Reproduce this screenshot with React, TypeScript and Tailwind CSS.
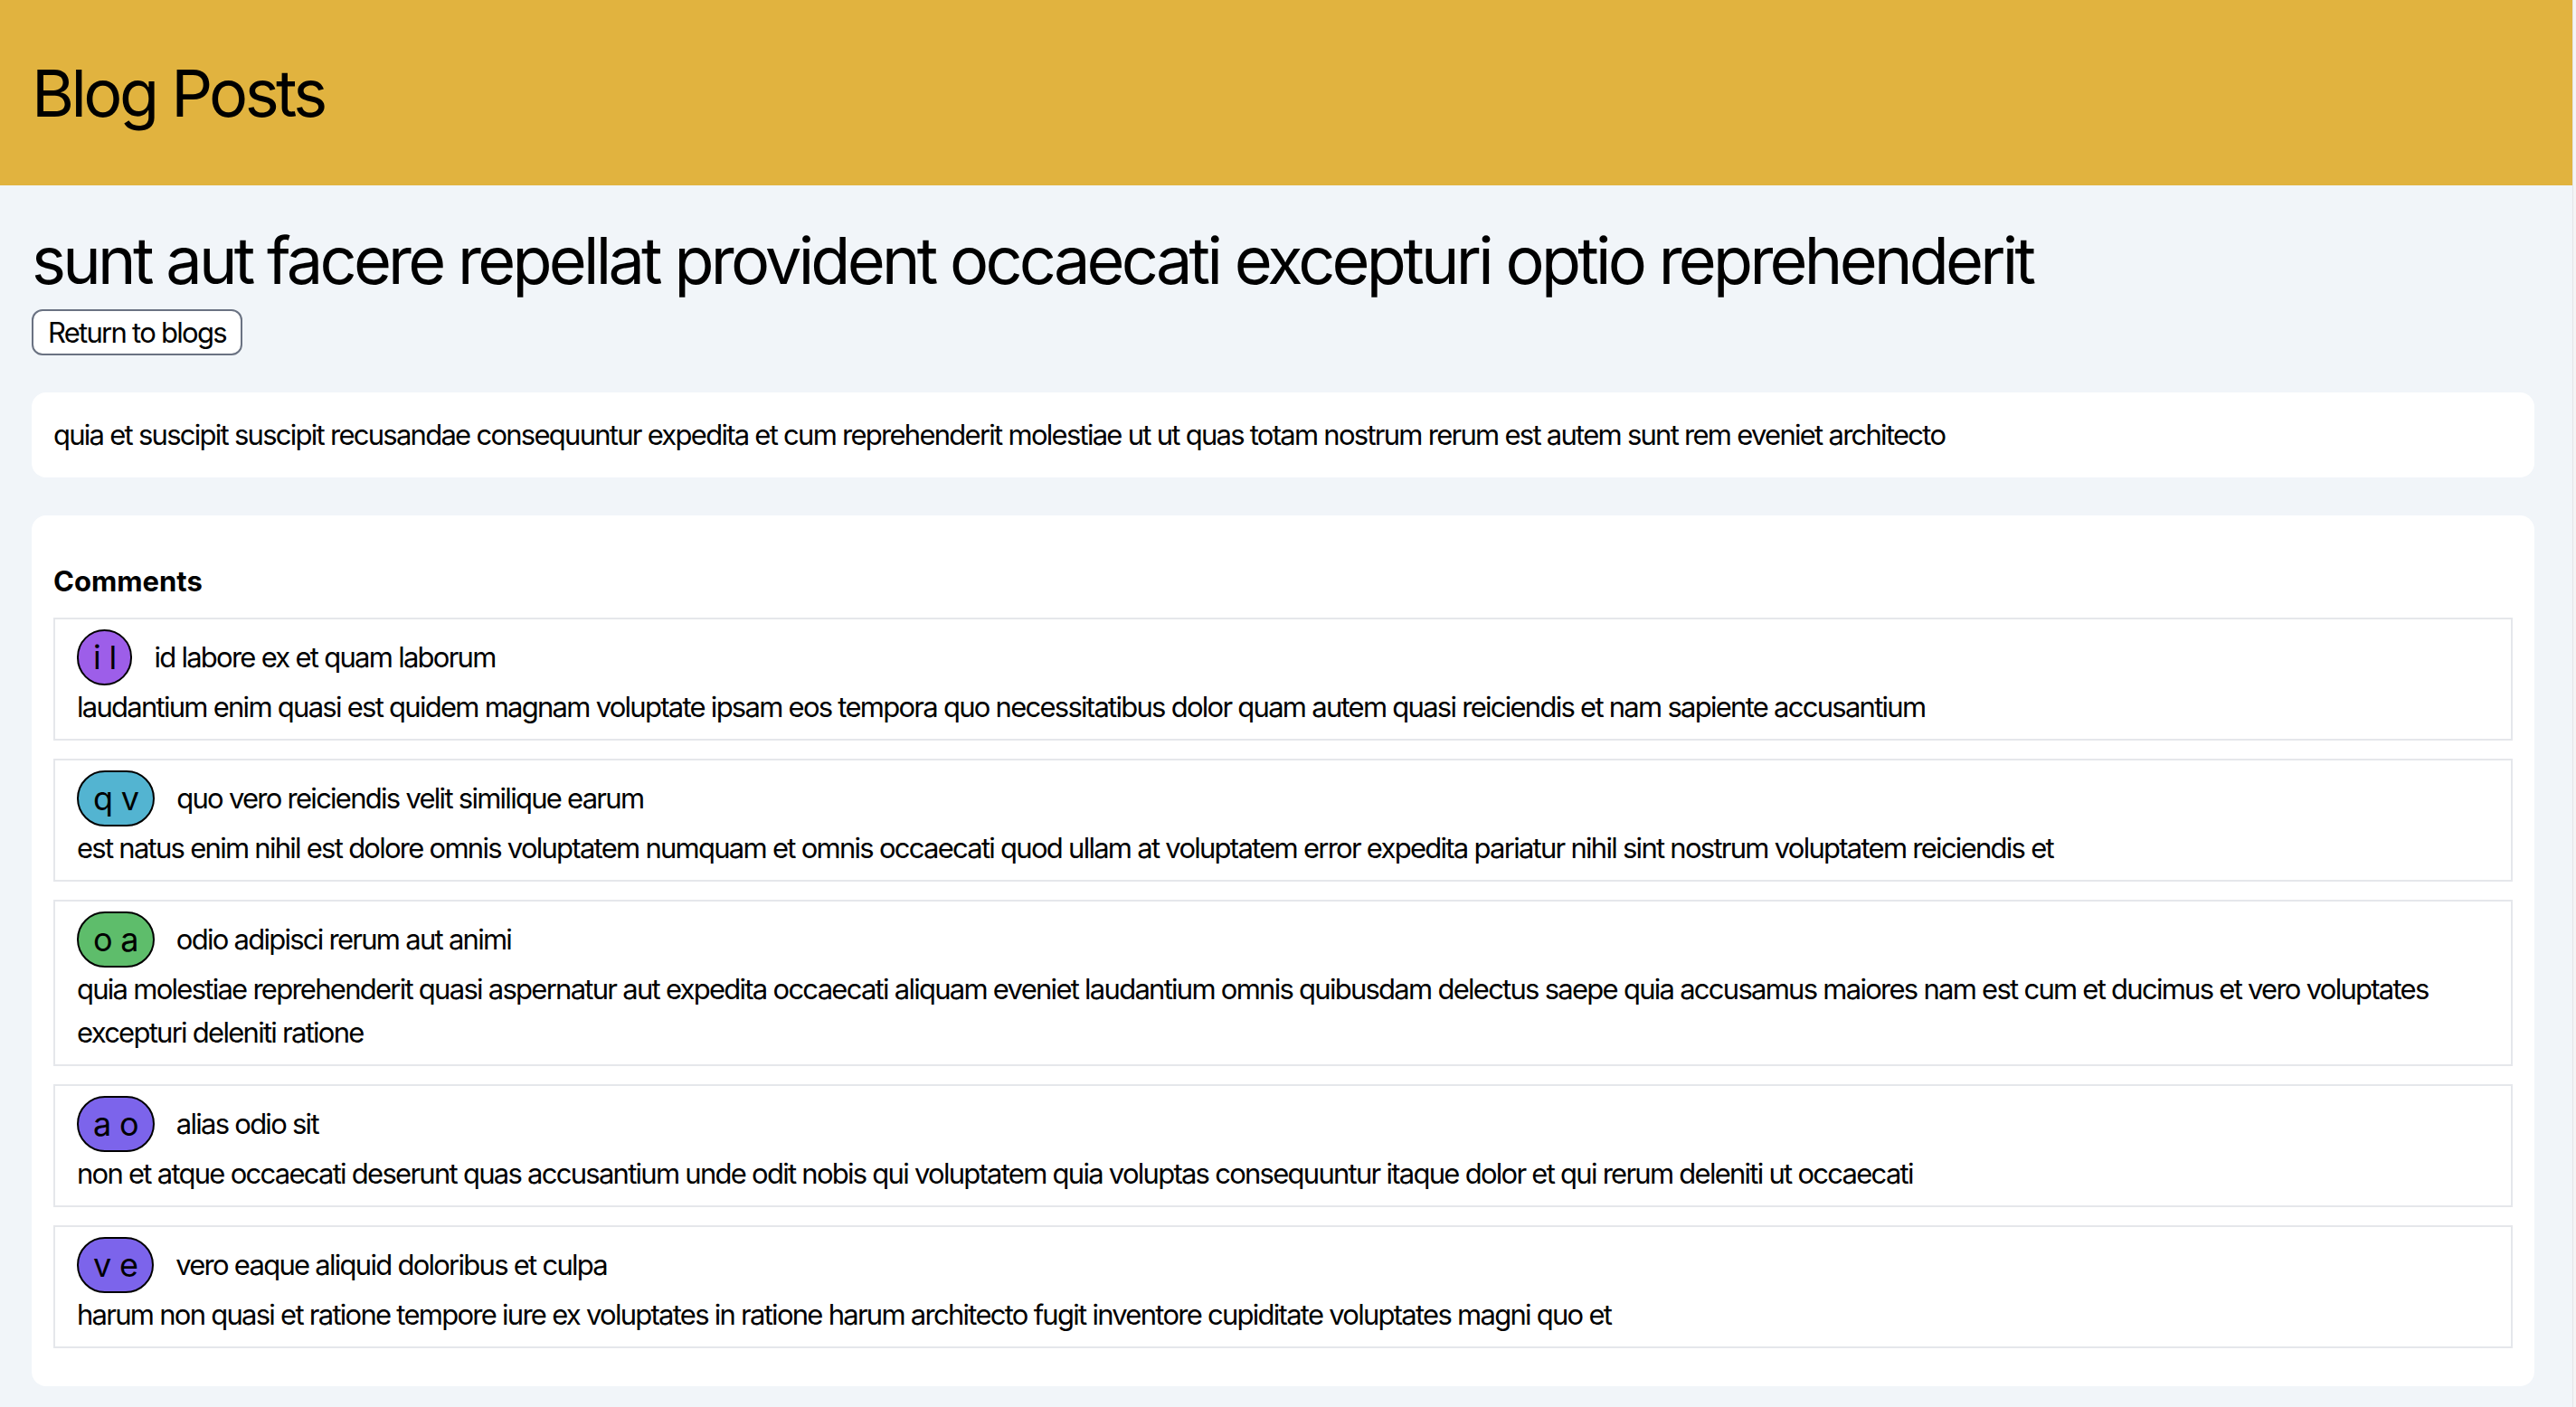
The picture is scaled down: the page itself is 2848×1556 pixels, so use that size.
const post = {
  title: 'sunt aut facere repellat provident occaecati excepturi optio reprehenderit',
  body: 'quia et suscipit suscipit recusandae consequuntur expedita et cum reprehenderit molestiae ut ut quas totam nostrum rerum est autem sunt rem eveniet architecto',
};

const comments = [
  {
    initials: 'i l',
    color: 'bg-[#9d5ee9]',
    name: 'id labore ex et quam laborum',
    body: 'laudantium enim quasi est quidem magnam voluptate ipsam eos tempora quo necessitatibus dolor quam autem quasi reiciendis et nam sapiente accusantium',
  },
  {
    initials: 'q v',
    color: 'bg-[#53b4d1]',
    name: 'quo vero reiciendis velit similique earum',
    body: 'est natus enim nihil est dolore omnis voluptatem numquam et omnis occaecati quod ullam at voluptatem error expedita pariatur nihil sint nostrum voluptatem reiciendis et',
  },
  {
    initials: 'o a',
    color: 'bg-[#5ebd6b]',
    name: 'odio adipisci rerum aut animi',
    body: 'quia molestiae reprehenderit quasi aspernatur aut expedita occaecati aliquam eveniet laudantium omnis quibusdam delectus saepe quia accusamus maiores nam est cum et ducimus et vero voluptates excepturi deleniti ratione',
  },
  {
    initials: 'a o',
    color: 'bg-[#7c64eb]',
    name: 'alias odio sit',
    body: 'non et atque occaecati deserunt quas accusantium unde odit nobis qui voluptatem quia voluptas consequuntur itaque dolor et qui rerum deleniti ut occaecati',
  },
  {
    initials: 'v e',
    color: 'bg-[#7c64eb]',
    name: 'vero eaque aliquid doloribus et culpa',
    body: 'harum non quasi et ratione tempore iure ex voluptates in ratione harum architecto fugit inventore cupiditate voluptates magni quo et',
  },
];

function CommentItem({ c }: { c: (typeof comments)[number] }) {
  return (
    <li className="border-2 border-gray-200 px-6 py-[11px] mb-5">
      <div className="flex items-center gap-6">
        <span
          className={`${c.color} border-2 border-black rounded-full px-4 text-[36px] leading-[58px] tracking-[-0.02em]`}
        >
          {c.initials}
        </span>
        <span>{c.name}</span>
      </div>
      <p>{c.body}</p>
    </li>
  );
}

export default function App() {
  return (
    <div
      className="flex min-h-screen bg-slate-100 text-black text-[31px] leading-[48px] tracking-[-0.056em]"
      style={{ fontFamily: 'Inter, "Noto Sans", sans-serif' }}
    >
      <div className="flex-1">
        <header className="h-[205px] flex items-center px-[35px] bg-[#e1b33f]">
          <h1 className="text-[72px] leading-[80px] tracking-[-0.05em]">Blog Posts</h1>
        </header>

        <main className="pl-[35px] pr-[42px] pt-[43px]">
          <h2 className="text-[72px] leading-[80px] tracking-[-0.052em]">{post.title}</h2>
          <button className="mt-[14px] border-2 border-gray-500 rounded-xl bg-white px-4 leading-[47px]">
            Return to blogs
          </button>

          <section className="mt-[41px] bg-white rounded-2xl px-6 py-[23px]">
            <p>{post.body}</p>
          </section>

          <section className="mt-[42px] bg-white rounded-2xl px-6 pt-6 pb-[22px]">
            <h3 className="mt-[25px] mb-4 font-bold tracking-normal">Comments</h3>
            <ul>
              {comments.map((c) => (
                <CommentItem key={c.initials + c.name} c={c} />
              ))}
            </ul>
          </section>
        </main>
      </div>
      <div className="w-1 bg-[#f4f4f6] border-l border-[#e4e4e7]" />
    </div>
  );
}
